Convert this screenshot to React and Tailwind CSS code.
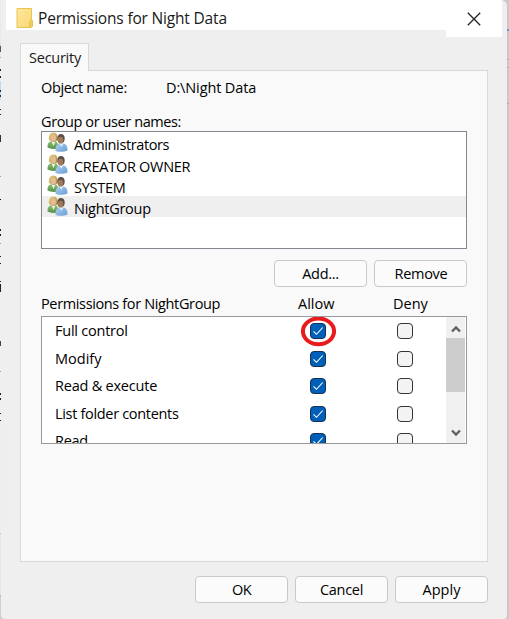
import React from 'react';

const FONT = "font-['Segoe_UI','Open_Sans','Noto_Sans',sans-serif]";

// Slivers of the window lying behind the dialog's left edge.
const SLIVERS = [
  'h-[44px] bg-[#e9e9e9]', 'h-[2px] bg-[#d5d5d5]', 'h-[6px] bg-[#555555]', 'h-[5px] bg-[#e9e9e9]',
  'h-px bg-[#aaaaaa]', 'h-[11px] bg-[#f0f0f0]', 'h-[2px] bg-[#222222]', 'h-[5px] bg-[#f0f0f0]', 'h-[2px] bg-[#222222]',
  'h-[3px] bg-[#f0f0f0]', 'h-[9px] bg-[#b9dcfa]', 'h-[2px] bg-[#203040]', 'h-[3px] bg-[#b9dcfa]', 'h-[2px] bg-[#203040]',
  'h-[3px] bg-[#b9dcfa]', 'h-[9px] bg-[#f0f0f0]', 'h-px bg-[#222222]', 'h-[4px] bg-[#f0f0f0]', 'h-px bg-[#222222]',
  'h-[20px] bg-[#f0f0f0]', 'h-[7px] bg-[#333333]', 'h-[34px] bg-[#f0f0f0]', 'h-px bg-[#999999]',
  'h-[22px] bg-[#f0f0f0]', 'h-px bg-[#111111]', 'h-[29px] bg-[#f0f0f0]', 'h-[2px] bg-[#222222]', 'h-[3px] bg-[#f0f0f0]',
  'h-[2px] bg-[#222222]', 'h-[7px] bg-[#f0f0f0]', 'h-px bg-[#999999]', 'h-[12px] bg-[#f0f0f0]', 'h-px bg-[#222222]',
  'h-[6px] bg-[#f0f0f0]', 'h-px bg-[#222222]', 'h-[17px] bg-[#f0f0f0]', 'h-px bg-[#222222]', 'h-[2px] bg-[#f0f0f0]',
  'h-[8px] bg-[#222222]', 'h-[49px] bg-[#f0f0f0]', 'h-[5px] bg-[#444444]', 'h-[25px] bg-[#f0f0f0]', 'h-px bg-[#999999]',
  'h-[21px] bg-[#f0f0f0]', 'h-[2px] bg-[#222222]', 'h-[3px] bg-[#f0f0f0]', 'h-[2px] bg-[#222222]', 'h-[13px] bg-[#f0f0f0]',
  'h-px bg-[#222222]', 'h-[6px] bg-[#f0f0f0]', 'h-px bg-[#222222]', 'h-[112px] bg-[#ededed]', 'h-px bg-[#c2c2c2]',
  'h-[61px] bg-[#e5e5e5]', 'h-px bg-[#aaaaaa]', 'h-[23px] bg-[#cfcfcf]',
];

function FolderIcon() {
  return (
    <svg width="18" height="21" viewBox="0 0 18 21" className="shrink-0">
      <defs>
        <linearGradient id="folder" x1="0" y1="0" x2="1" y2="1">
          <stop offset="0" stopColor="#ffe79c" />
          <stop offset="1" stopColor="#f8d775" />
        </linearGradient>
      </defs>
      <path d="M1 .5h14.5v11.5l1 1v5l-1.5 1.5H1z" fill="url(#folder)" stroke="#e9c450" />
      <path d="M13.500 19v-5.500l1.500-2 1.500 1.500v5L15 19.500z" fill="#efcc5b" stroke="#e4bd45" strokeWidth=".7" />
    </svg>
  );
}

function GroupIcon() {
  return (
    <svg width="21" height="20" viewBox="0 0 21 20" className="shrink-0">
      <defs>
        <linearGradient id="green" x1="0" y1="0" x2="0" y2="1">
          <stop offset="0" stopColor="#8fc274" />
          <stop offset="1" stopColor="#55914a" />
        </linearGradient>
        <linearGradient id="blue" x1="0" y1="0" x2="1" y2="1">
          <stop offset="0" stopColor="#a9d0f2" />
          <stop offset="1" stopColor="#6a9dd2" />
        </linearGradient>
        <linearGradient id="hair" x1="0" y1="0" x2="1" y2="1">
          <stop offset="0" stopColor="#ead98b" />
          <stop offset="1" stopColor="#9c813a" />
        </linearGradient>
      </defs>
      <path d="M.5 15.500c0-4 1-6 4.500-6.500h3c2.500.5 3.500 3 3.500 7-3 1.300-8 1.200-11-.5z" fill="url(#green)" />
      <path d="M4.500 9.500l2 4.500 2-4.500z" fill="#eef3e8" />
      <path d="M2 8c-.8-4 .5-7.500 4.300-7.500S11 4 10.200 8.500L7 10z" fill="url(#hair)" />
      <ellipse cx="6.500" cy="6" rx="2.500" ry="3.500" fill="#e7b98d" />
      <path d="M8.500 19c-.2-4.500 1-7 4-7.500h4c3 .5 4 3 4 7-3 1.700-9 1.700-12 .5z" fill="url(#blue)" />
      <path d="M12.300 11.500l2 3.200 2-3.200z" fill="#e8f2fb" />
      <ellipse cx="14" cy="6.500" rx="3.700" ry="4.500" fill="#5c5048" />
      <ellipse cx="13.600" cy="8.200" rx="2.600" ry="3.400" fill="#a37a59" />
    </svg>
  );
}

function Check() {
  return (
    <span className="flex size-4 items-center justify-center rounded-[4px] border border-[#17324f] bg-[#005fb8]">
      <svg width="12" height="12" viewBox="0 0 12 12" className="shrink-0">
        <path d="M1.500 6.300l3 3L10.700 2.500" fill="none" stroke="#fff" strokeWidth="1.100" />
      </svg>
    </span>
  );
}

function Button({ children, text = '' }) {
  return (
    <button className="flex h-[27px] w-[93px] items-center justify-center rounded-[4px] border border-[#c9c9c9] bg-[#fbfbfb]">
      <span className={text}>{children}</span>
    </button>
  );
}

const USERS = [
  { name: 'Administrators', row: '', text: 'tracking-[-0.38px]' },
  { name: 'CREATOR OWNER', row: '', text: 'tracking-[-0.28px]' },
  { name: 'SYSTEM', row: '', text: 'tracking-[-0.25px]' },
  { name: 'NightGroup', row: 'bg-[#efefef]', text: 'tracking-[-0.27px]' },
];

const PERMISSIONS = [
  { name: 'Full control', text: 'tracking-[-0.23px]', h: 'h-7', ring: true },
  { name: 'Modify', text: '', h: 'h-[27px]' },
  { name: 'Read & execute', text: 'tracking-[-0.22px]', h: 'h-7' },
  { name: 'List folder contents', text: 'tracking-[-0.32px]', h: 'h-[27px]' },
  { name: 'Read', text: 'tracking-[-0.3px]', h: 'h-7' },
];

function Chevron({ d }) {
  return (
    <svg width="10" height="8" viewBox="0 0 10 8">
      <path d={d} fill="none" stroke="#606060" strokeWidth="2.400" />
    </svg>
  );
}

export default function App() {
  return (
    <div className={`flex h-[619px] w-[509px] overflow-hidden bg-[#c9c9c9] text-[14.5px] leading-5 text-black ${FONT}`}>
      <div className="flex w-px flex-col">
        {SLIVERS.map((s, i) => <i key={i} className={`w-px shrink-0 ${s}`} />)}
      </div>

      <main className="flex w-[506px] flex-col rounded-tr-[6px] rounded-br-[4px] rounded-bl-[4px] bg-[#efefef]">
        <header className="ml-[5px] flex h-[30px] w-[496px] items-start bg-white">
          <div className="flex items-start gap-1 pt-2 pl-[10px]">
            <FolderIcon />
            <h1 className="text-[15.5px] text-[#191919]"><span className="tracking-[-0.18px]">Permissions for Night Data</span></h1>
          </div>
          <button aria-label="Close" className="ml-auto flex h-[37px] w-14 items-center justify-center bg-white">
            <svg width="14" height="14" viewBox="0 0 14 14">
              <path d="M.8.8l12.400 12.400M13.200.8L.8 13.200" stroke="#222" strokeWidth="1.300" />
            </svg>
          </button>
        </header>

        <div className="mt-[13px] ml-[19px] flex w-[468px] flex-col">
          <div className="z-10 -mb-px flex h-7 w-[69px] items-center justify-center border border-b-0 border-[#d9d9d9] bg-[#f9f9f9] pl-px text-[#191919]">
            <span className="tracking-[-0.27px]">Security</span>
          </div>
          <section className="flex h-[492px] flex-col border border-[#d9d9d9] bg-[#f9f9f9] pt-[7px] pr-5 pl-5">
            <div className="flex">
              <span className="w-[125px]"><span className="tracking-[-0.36px]">Object name:</span></span>
              <span className="tracking-[-0.12px]">D:\Night Data</span>
            </div>
            <div className="mt-[14px] h-5"><span className="tracking-[-0.4px]">Group or user names:</span></div>

            <ul className="-mt-px flex h-[118px] w-[426px] flex-col border border-[#828790] bg-white">
              {USERS.map((u) => (
                <li key={u.name} className={`flex h-[21px] items-start gap-[6px] pl-[5px] first:h-[22px] ${u.row}`}>
                  <GroupIcon />
                  <span className={`pt-[3px] ${u.text}`}>{u.name}</span>
                </li>
              ))}
            </ul>

            <div className="mt-[11px] flex w-[426px] justify-end gap-[7px]">
              <Button text="tracking-[-0.3px]">Add...</Button>
              <Button text="tracking-[-0.3px] -mr-px">Remove</Button>
            </div>

            <div className="mt-[7px] flex h-5 w-[426px]">
              <span className="w-[257px]"><span className="tracking-[-0.36px]">Permissions for NightGroup</span></span>
              <span className="w-[95px]"><span>Allow</span></span>
              <span>Deny</span>
            </div>

            <div className="mt-[2px] flex h-[128px] w-[426px] overflow-hidden border border-[#999999] bg-white">
              <div className="flex w-[404px] flex-col pt-px">
                {PERMISSIONS.map((p) => (
                  <div key={p.name} className={`flex shrink-0 items-start pt-[5px] pl-[13px] ${p.h}`}>
                    <span className="-mt-[2px] w-[255px]"><span className={p.text}>{p.name}</span></span>
                    <span className="relative w-[87px]">
                      <Check />
                      {p.ring && (
                        <svg className="absolute -top-[7px] -left-[10px]" width="38" height="32" viewBox="0 0 38 32">
                          <ellipse cx="18.500" cy="15.300" rx="15.600" ry="12.900" fill="none" stroke="#e81c1c" strokeWidth="4" />
                        </svg>
                      )}
                    </span>
                    <span className="size-4 rounded-[4px] border border-[#333333] bg-[#f3f3f3]" />
                  </div>
                ))}
              </div>
              <div className="flex w-[19px] flex-col items-center bg-[#f0f0f0]">
                <span className="flex h-[21px] items-center pt-[3px]"><Chevron d="M1 6.500l4-4 4 4" /></span>
                <span className="h-[54px] w-[19px] bg-[#cdcdcd]" />
                <span className="mt-auto flex h-[20px] items-center"><Chevron d="M1 1.500l4 4 4-4" /></span>
              </div>
            </div>
          </section>

          <footer className="mt-[14px] flex justify-end gap-[7px]">
            <Button text="tracking-[-0.5px]">OK</Button>
            <Button text="tracking-[-0.3px]">Cancel</Button>
            <Button>Apply</Button>
          </footer>
        </div>
      </main>

      <div className="flex w-[2px] flex-col bg-[#c9c9c9]">
        <i className="mt-[29px] h-[2px] bg-[#5b9bd0]" />
        <i className="mt-[28px] h-px bg-[#aaaaaa]" />
        <i className="mt-[7px] h-px bg-[#aaaaaa]" />
        <i className="mt-[35px] h-px bg-[#aaaaaa]" />
      </div>
    </div>
  );
}
